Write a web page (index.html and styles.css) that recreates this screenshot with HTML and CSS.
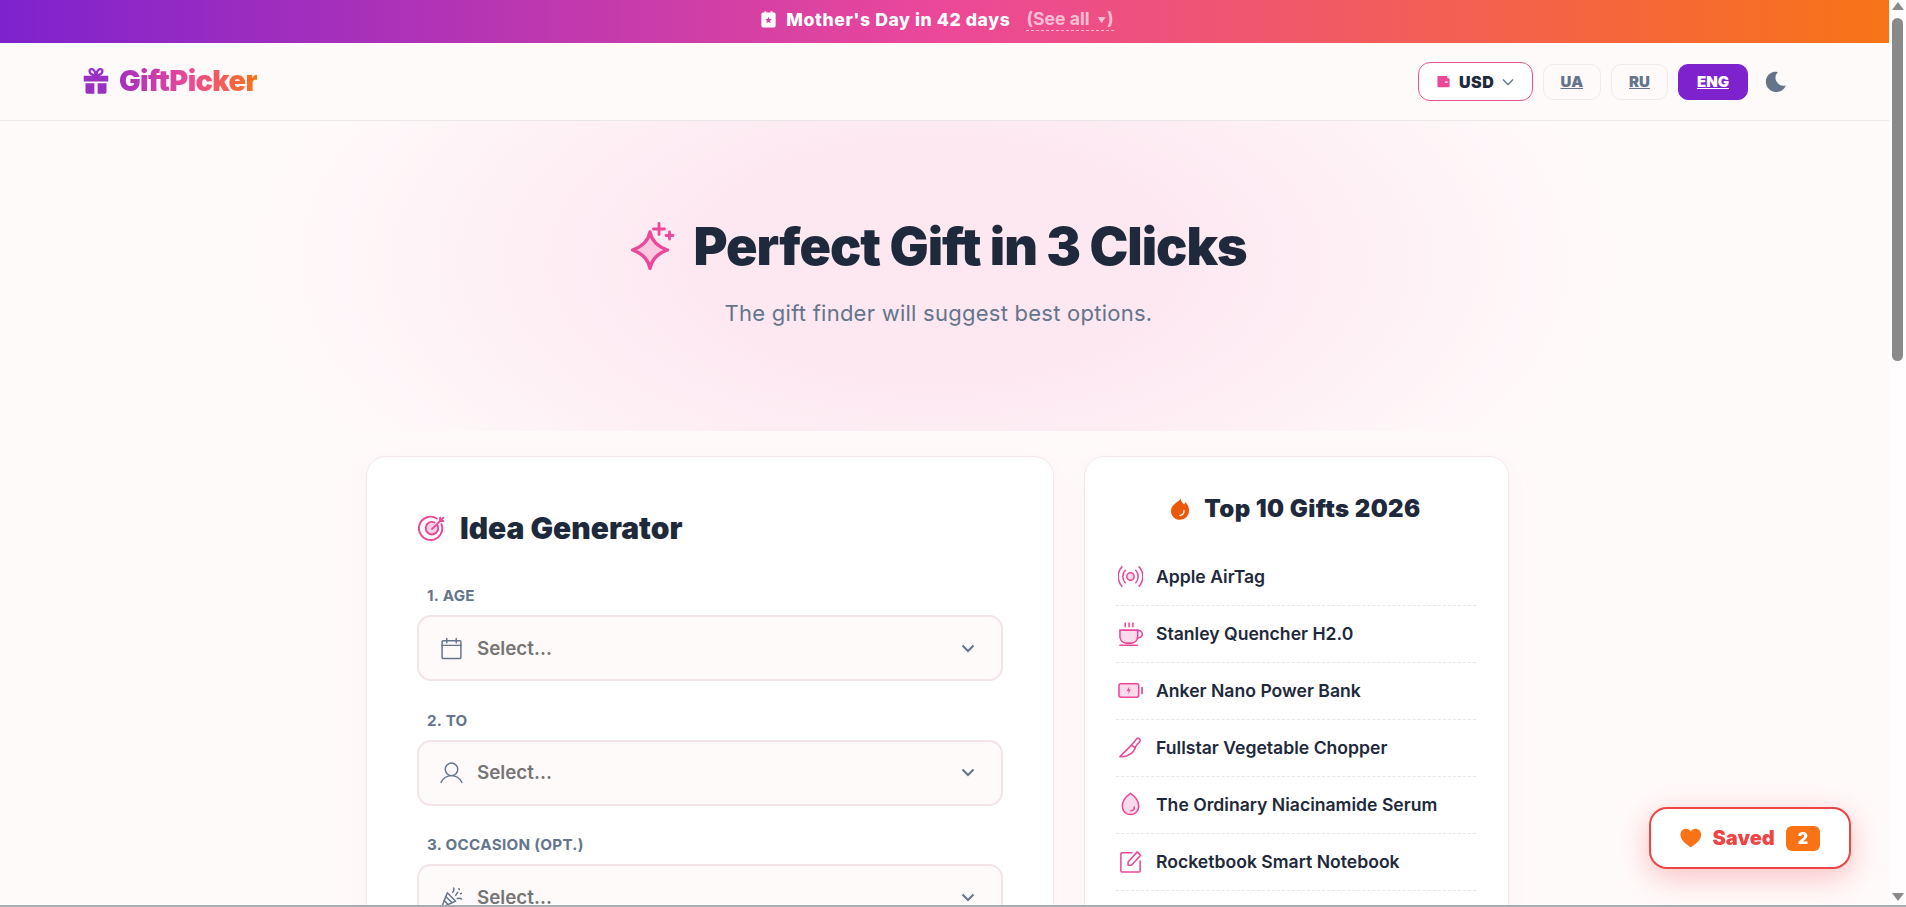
FILE: index.html
```html
<!DOCTYPE html>
<html lang="en">
<head>
    <meta charset="UTF-8">
    <meta name="viewport" content="width=device-width, initial-scale=1.0">
    <title>GiftPicker</title>
    <link rel="stylesheet" href="styles.css">
</head>
<body>

<div class="page">
    <div class="main">

        <!-- Holiday banner -->
        <div class="banner">
            <svg class="banner-icon" viewBox="0 0 24 24"><path fill="#fff" fill-rule="evenodd" d="M5 3h2V1.500h2.400V3h5.200V1.500H17V3h2a2 2 0 0 1 2 2v15a2 2 0 0 1-2 2H5a2 2 0 0 1-2-2V5a2 2 0 0 1 2-2zm7 5.500 1.200 2.900 3.100.2-2.400 2 .8 3-2.700-1.600-2.700 1.600.8-3-2.400-2 3.100-.2z"/></svg>
            <span class="banner-text">Mother's Day in 42 days</span>
            <a class="banner-link">(See all <span class="banner-caret">▼</span>)</a>
        </div>

        <!-- Header -->
        <header class="header">
            <div class="logo">
                <svg class="logo-icon" viewBox="0 0 24 24">
                    <path fill="#9a2fc4" d="M1.500 7.500h21v5h-21zM3 14h7.600v9H4.500A1.500 1.500 0 0 1 3 21.500zM13.400 14H21v7.500a1.500 1.500 0 0 1-1.500 1.500h-6.100z"/>
                    <path fill="none" stroke="#9a2fc4" stroke-width="2" d="M12 7C9 7 6.500 6 6.500 3.500S10.500.5 12 7zm0 0c3 0 5.500-1 5.500-3.500S13.500.5 12 7z"/>
                </svg>
                <span class="logo-text">GiftPicker</span>
            </div>
            <div class="header-tools">
                <button class="currency">
                    <svg class="currency-icon" viewBox="0 0 16 16"><path fill="#ec4899" d="M2.500 2h9.500v2.500h1.500a1 1 0 0 1 1 1v7.500a1 1 0 0 1-1 1h-11a1 1 0 0 1-1-1V3a1 1 0 0 1 1-1z"/><rect x="9.500" y="8" width="3" height="1.300" fill="#fff"/></svg>
                    <span>USD</span>
                    <svg class="currency-caret" viewBox="0 0 12 8"><path fill="none" stroke="#64748b" stroke-width="1.300" d="M1 1.500l5 5 5-5"/></svg>
                </button>
                <a class="lang">UA</a>
                <a class="lang">RU</a>
                <a class="lang lang-active">ENG</a>
                <svg class="moon" viewBox="0 0 24 24"><path fill="#64748b" d="M13.800 2.200a8 8 0 0 0 8 13.200A10.300 10.300 0 1 1 9.200 1.900c1.700-.2 3.200-.1 4.600.3z"/></svg>
            </div>
        </header>

        <!-- Hero -->
        <section class="hero">
            <h1 class="hero-title">
                <svg class="hero-icon" viewBox="0 0 48 48">
                    <path fill="#ec4899" fill-opacity=".2" stroke="#ec4899" stroke-width="3.400" stroke-linejoin="round" d="M20 10c1.500 8 6 14 17.500 18C26 32 21.500 38 20 46.500 18.500 38 14 32 2.500 28 14 24 18.500 18 20 10z"/>
                    <path fill="none" stroke="#ec4899" stroke-width="2.800" stroke-linecap="round" d="M29 1.500v11M23.500 7h11M39.500 10v7M36 13.500h7"/>
                </svg>
                Perfect Gift in 3 Clicks
            </h1>
            <p class="hero-sub">The gift finder will suggest best options.</p>
        </section>

        <!-- Main columns -->
        <div class="columns">
            <section class="card card-form">
                <h2 class="form-title">
                    <svg class="form-icon" viewBox="0 0 26 26">
                        <circle cx="13" cy="14" r="5.500" fill="#ec4899" fill-opacity=".25"/>
                        <g fill="none" stroke="#ec4899" stroke-width="1.800" stroke-linecap="round">
                            <path d="M21.800 9.500A10.800 10.800 0 1 1 17.500 4.200"/>
                            <path d="M18 10.300a5.800 5.800 0 1 1-2.600-2.400"/>
                            <path d="M13 14 23.500 3.500M20.500 3.500v3h3"/>
                        </g>
                    </svg>
                    Idea Generator
                </h2>

                <div class="form-group">
                    <label class="form-label">1. AGE</label>
                    <div class="select-box">
                        <svg class="select-icon" viewBox="0 0 22 22"><g fill="none" stroke="#64748b" stroke-width="1.400" stroke-linecap="round"><rect x="2" y="3.500" width="18" height="17" rx="1"/><path d="M2 8h18M6.500 1.500v4M15.500 1.500v4"/></g></svg>
                        <span class="select-text">Select...</span>
                        <svg class="select-caret" viewBox="0 0 14 9"><path fill="none" stroke="#64748b" stroke-width="2" d="M1.500 1.500 7 7l5.500-5.500"/></svg>
                    </div>
                </div>

                <div class="form-group">
                    <label class="form-label">2. TO</label>
                    <div class="select-box">
                        <svg class="select-icon" viewBox="0 0 22 22"><g fill="none" stroke="#64748b" stroke-width="1.400" stroke-linecap="round"><circle cx="11" cy="8" r="6"/><path d="M1 20.500c2-3.800 5.500-6.500 10-6.500s8 2.700 10 6.500"/></g></svg>
                        <span class="select-text">Select...</span>
                        <svg class="select-caret" viewBox="0 0 14 9"><path fill="none" stroke="#64748b" stroke-width="2" d="M1.500 1.500 7 7l5.500-5.500"/></svg>
                    </div>
                </div>

                <div class="form-group">
                    <label class="form-label">3. OCCASION (OPT.)</label>
                    <div class="select-box">
                        <svg class="select-icon" viewBox="0 0 22 22"><g fill="none" stroke="#64748b" stroke-width="1.400" stroke-linecap="round" stroke-linejoin="round"><path d="M1.500 20.500 7 6.500l8 8z"/><path d="M4 14l4 4M5.500 10l6 6M12 6c1.500-1 1.500-2.500 1-4M15 9l2-3M16.500 12c1.500-.5 3-.5 4 .5M18 2.500l.5 1M20.500 7l-1 .5"/></g></svg>
                        <span class="select-text">Select...</span>
                        <svg class="select-caret" viewBox="0 0 14 9"><path fill="none" stroke="#64748b" stroke-width="2" d="M1.500 1.500 7 7l5.500-5.500"/></svg>
                    </div>
                </div>
            </section>

            <aside class="card card-top">
                <h3 class="top-title">
                    <svg class="top-icon" viewBox="0 0 18 22"><path fill="#ea580c" d="M9.500.5c.6 3 2 4.300 3.600 6 .6-.7 1-1.500 1.200-2.400C16.500 6.300 18 9.100 18 12.500 18 18 14 21.800 9 21.800S0 18 0 12.900C0 8.500 3 6.800 5 4.800 6.800 3.500 8.800 2.500 9.500.5z"/><path fill="none" stroke="#fff" stroke-width="1.300" stroke-linecap="round" d="M13 12.500c0 3-1.500 4.700-4 5"/></svg>
                    Top 10 Gifts 2026
                </h3>
                <ul class="top-list">
                    <li class="top-item">
                        <svg class="item-icon" viewBox="0 0 26 26"><g fill="none" stroke="#ec4899" stroke-width="1.600" stroke-linecap="round"><circle cx="13" cy="13" r="3.800" fill="#ec4899" fill-opacity=".2"/><path d="M7.500 6.500c-3.300 3.500-3.300 9.500 0 13M18.500 6.500c3.300 3.500 3.300 9.500 0 13M4 3c-5 5.500-5 14.500 0 20M22 3c5 5.500 5 14.500 0 20"/></g></svg>
                        Apple AirTag
                    </li>
                    <li class="top-item">
                        <svg class="item-icon" viewBox="0 0 26 26"><g fill="none" stroke="#ec4899" stroke-width="1.600" stroke-linecap="round"><path fill="#ec4899" fill-opacity=".2" d="M2 9.500h18.500v7a6.500 6.500 0 0 1-6.500 6.500H8.500A6.500 6.500 0 0 1 2 16.500z"/><path d="M20.500 10h1a3.500 3.500 0 0 1 0 7.500h-1.500M2 25.200h18M7.500 2v4M11.500 2v4M15.500 2v4"/></g></svg>
                        Stanley Quencher H2.0
                    </li>
                    <li class="top-item">
                        <svg class="item-icon" viewBox="0 0 26 26"><rect x="1" y="6" width="20.500" height="14" rx="2" fill="#ec4899" fill-opacity=".2" stroke="#ec4899" stroke-width="1.600"/><path fill="none" stroke="#ec4899" stroke-width="1.800" stroke-linecap="round" d="M25 10v6"/><path fill="#ec4899" d="M12 8.500 9 13.500h2.200l-1 3.500 3.300-5h-2.200z"/></svg>
                        Anker Nano Power Bank
                    </li>
                    <li class="top-item">
                        <svg class="item-icon" viewBox="0 0 26 26"><g fill="none" stroke="#ec4899" stroke-width="1.600" stroke-linejoin="round" stroke-linecap="round"><path d="M2 22.500 14 10.500l6-7c1-1 4 1.500 3 3l-4 4.500-1 1.500C17 18.500 9 23.500 2 22.500z"/><path d="M14 10.500l4 3"/></g></svg>
                        Fullstar Vegetable Chopper
                    </li>
                    <li class="top-item">
                        <svg class="item-icon" viewBox="0 0 26 26"><g fill="none" stroke="#ec4899" stroke-width="1.600" stroke-linecap="round"><path fill="#ec4899" fill-opacity=".2" d="M13 1.500c-3 2-8.500 7-8.500 13.500a8.500 8.500 0 0 0 17 0C21.500 8.500 16 3.500 13 1.500z"/><path d="M17 15.500a4 4 0 0 1-3.500 4"/></g></svg>
                        The Ordinary Niacinamide Serum
                    </li>
                    <li class="top-item">
                        <svg class="item-icon" viewBox="0 0 26 26"><g fill="none" stroke="#ec4899" stroke-width="1.600" stroke-linecap="round" stroke-linejoin="round"><path d="M23 12.500v10.500a1 1 0 0 1-1 1H4a1 1 0 0 1-1-1V5a1 1 0 0 1 1-1h10.500"/><path d="M10.500 17v-3.500L20 3l3.500 3.500L14 17z"/></g></svg>
                        Rocketbook Smart Notebook
                    </li>
                </ul>
            </aside>
        </div>
    </div>

    <!-- Page scrollbar -->
    <div class="scrollbar">
        <span class="scroll-arrow scroll-up"></span>
        <span class="scroll-thumb"></span>
        <span class="scroll-arrow scroll-down"></span>
    </div>

    <button class="saved">
        <svg class="saved-icon" viewBox="0 0 24 22"><path fill="#f97316" d="M12 21.500C5 16.500.5 12.500.5 7.300.5 3.300 3.500.8 6.800.8c2.200 0 4 1 5.200 3 1.200-2 3-3 5.200-3 3.300 0 6.300 2.500 6.300 6.500 0 5.200-4.500 9.200-11.500 14.200z"/></svg>
        <span>Saved</span>
        <span class="saved-count">2</span>
    </button>
</div>

</body>
</html>
```

FILE: styles.css
```css
* {
    box-sizing: border-box;
}

body {
    font-family: Inter, "Liberation Sans", sans-serif;
    margin: 0;
    padding: 0;
    background-color: #fffafa;
    color: #1e293b;
}

.page {
    display: flex;
    height: 100vh;
    overflow: hidden;
    border-bottom: 2px solid #a5adb2;
}

.main {
    flex: 1;
    min-width: 0;
}

/* banner */
.banner {
    height: 43px;
    padding: 0 16px 4px 0;
    display: flex;
    align-items: center;
    justify-content: center;
    background: linear-gradient(90deg, #7e22ce, #ec4899 50%, #f97316);
    color: white;
    font-size: 17.6px;
    font-weight: 800;
}

.banner-icon {
    width: 19px;
    height: 19px;
    margin-right: 8px;
}

.banner-text {
    letter-spacing: 0.6px;
}

.banner-link {
    margin-left: 16px;
    padding-bottom: 1px;
    border-bottom: 1px dashed rgba(255, 255, 255, 0.6);
    color: rgba(255, 255, 255, 0.65);
    font-size: 17.6px;
    font-weight: 700;
}

.banner-caret {
    margin: 0 1px 0 4px;
    font-size: 8px;
    vertical-align: 2px;
}

/* header */
.header {
    height: 78px;
    padding: 0 101px 0 82px;
    display: flex;
    align-items: center;
    justify-content: space-between;
    border-bottom: 1px solid #ebe6e8;
}

.logo {
    display: flex;
    align-items: center;
    gap: 9px;
    margin-top: -2px;
}

.logo-icon {
    width: 28px;
    height: 28px;
}

.logo-text {
    font-size: 28.8px;
    font-weight: 900;
    letter-spacing: -0.6px;
    background: linear-gradient(90deg, #a42fc0, #ec4899 50%, #f97316);
    -webkit-background-clip: text;
    background-clip: text;
    color: transparent;
}

.header-tools {
    display: flex;
    align-items: center;
    gap: 10px;
}

.currency {
    width: 115px;
    height: 39px;
    display: flex;
    align-items: center;
    justify-content: center;
    gap: 8px;
    background-color: white;
    border: 1px solid #e8558f;
    border-radius: 12px;
    color: #1e293b;
    font-family: inherit;
    font-size: 16px;
    font-weight: 900;
    letter-spacing: 0.5px;
}

.currency-icon {
    width: 15px;
    height: 15px;
}

.currency-caret {
    width: 12px;
    height: 8px;
}

.lang {
    height: 36px;
    padding: 0 17px;
    display: flex;
    align-items: center;
    border: 1px solid #efeaec;
    border-radius: 10px;
    color: #64748b;
    font-size: 15px;
    font-weight: 900;
    text-decoration: underline;
}

.lang-active {
    padding: 0 18px;
    background-color: #7e22ce;
    border-color: #7e22ce;
    color: white;
}

.moon {
    width: 24px;
    height: 24px;
    margin-left: 6px;
}

/* hero */
.hero {
    height: 310px;
    padding: 94px 12px 0 0;
    text-align: center;
    background: radial-gradient(ellipse 680px 340px at 49.500% 45%, #fde8f1 35%, rgba(253, 232, 241, 0) 100%);
}

.hero-title {
    margin: 0;
    display: flex;
    align-items: center;
    justify-content: center;
    gap: 15px;
    font-size: 52px;
    line-height: 63px;
    font-weight: 900;
    letter-spacing: -1px;
}

.hero-icon {
    width: 48px;
    height: 48px;
    margin-top: -2px;
}

.hero-sub {
    margin: 20px 0 0;
    color: #64748b;
    font-size: 22px;
    line-height: 30px;
    letter-spacing: 0.25px;
}

/* columns */
.columns {
    padding: 25px 0 0 366px;
    display: flex;
    gap: 30px;
    align-items: flex-start;
}

.card {
    background-color: white;
    border: 1px solid #f6e6ec;
    border-radius: 20px;
    box-shadow: 0 8px 30px rgba(236, 72, 153, 0.05);
}

.card-form {
    width: 688px;
    height: 700px;
    padding: 50px 50px 0;
}

.card-top {
    width: 425px;
    height: 700px;
    padding: 32px 32px 0 31px;
}

.form-title {
    margin: 0 0 38px;
    display: flex;
    align-items: center;
    gap: 14px;
    font-size: 30px;
    line-height: 42px;
    font-weight: 900;
}

.form-icon {
    width: 28px;
    height: 28px;
    margin-left: 1px;
}

.form-group {
    margin-bottom: 30.5px;
}

.form-label {
    display: block;
    margin: 0 0 10px 10px;
    color: #64748b;
    font-size: 15.2px;
    line-height: 18px;
    font-weight: 700;
    letter-spacing: 0.3px;
}

.select-box {
    height: 66px;
    padding: 0 26px 0 21px;
    display: flex;
    align-items: center;
    gap: 14px;
    background-color: #fffafa;
    border: 2px solid #f3e4e9;
    border-radius: 14px;
}

.select-icon {
    width: 23px;
    height: 23px;
}

.select-text {
    flex: 1;
    color: #757575;
    font-size: 18.8px;
    font-weight: 600;
}

.select-caret {
    width: 14px;
    height: 9px;
}

.top-title {
    margin: 0 0 20px;
    display: flex;
    align-items: center;
    justify-content: center;
    gap: 15px;
    font-size: 24px;
    line-height: 40px;
    font-weight: 900;
    letter-spacing: 0.4px;
}

.top-icon {
    width: 18px;
    height: 22px;
}

.top-list {
    margin: 0;
    padding: 0;
    list-style: none;
}

.top-item {
    height: 57px;
    padding: 0 0 2px 2px;
    display: flex;
    align-items: center;
    gap: 13px;
    border-bottom: 1px dashed #e9e6e8;
    font-size: 17.6px;
    font-weight: 600;
}

.item-icon {
    width: 25px;
    height: 25px;
}

/* scrollbar */
.scrollbar {
    width: 17px;
    flex-shrink: 0;
    display: flex;
    flex-direction: column;
    align-items: center;
    background-color: #fffdfd;
}

.scroll-arrow {
    width: 0;
    height: 0;
    border-left: 6px solid transparent;
    border-right: 6px solid transparent;
}

.scroll-up {
    margin-top: 2px;
    border-bottom: 8px solid #8a8a8a;
}

.scroll-thumb {
    width: 11px;
    height: 343px;
    margin-top: 8px;
    background-color: #8a8a8a;
    border-radius: 6px;
}

.scroll-down {
    margin-top: auto;
    margin-bottom: 4px;
    border-top: 8px solid #8a8a8a;
}

/* saved button floats over the page */
.saved {
    position: fixed;
    right: 55px;
    bottom: 38px;
    width: 202px;
    height: 62px;
    display: flex;
    align-items: center;
    padding: 0 29px;
    gap: 11px;
    background-color: white;
    border: 2px solid #ef4444;
    border-radius: 18px;
    box-shadow: 0 8px 30px rgba(239, 68, 68, 0.32);
    color: #ef4444;
    font-family: inherit;
    font-size: 20px;
    font-weight: 900;
}

.saved-icon {
    width: 22px;
    height: 20px;
}

.saved-count {
    width: 35px;
    height: 25px;
    line-height: 25px;
    background-color: #f97316;
    border-radius: 6px;
    color: white;
    font-size: 16px;
    text-align: center;
}
```
